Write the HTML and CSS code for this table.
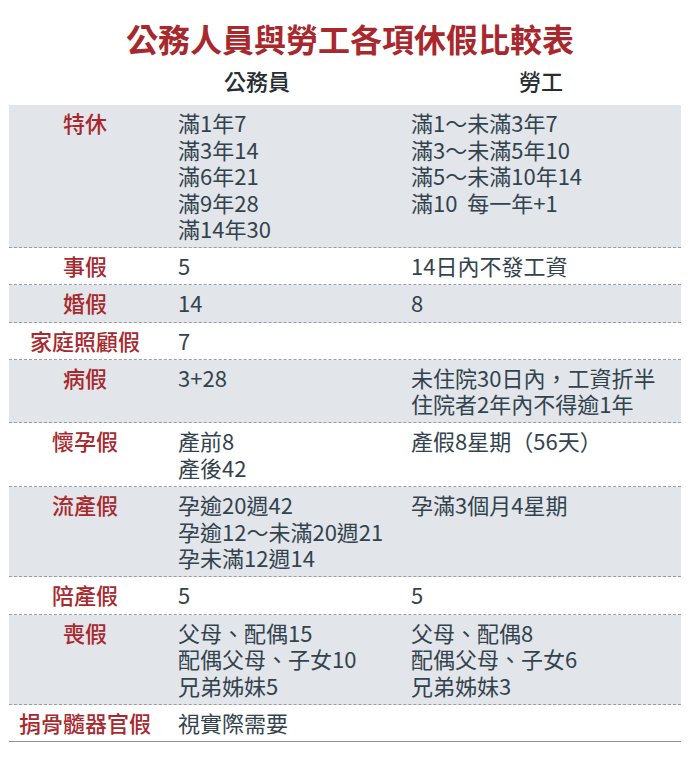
FILE: index.html
```html
<!DOCTYPE html>
<html lang="zh-Hant">
<head>
<meta charset="utf-8">
<title>公務人員與勞工各項休假比較表</title>
<link rel="stylesheet" href="styles.css">
</head>
<body>
<div class="page">
  <h1 class="title">公務人員與勞工各項休假比較表</h1>
  <div class="head">
    <div></div>
    <div class="h-gov">公務員</div>
    <div class="h-labor">勞工</div>
  </div>
  <div class="table">
    <div class="row gray">
      <div class="label">特休</div>
      <div class="val">滿1年7<br>滿3年14<br>滿6年21<br>滿9年28<br>滿14年30</div>
      <div class="val">滿1～未滿3年7<br>滿3～未滿5年10<br>滿5～未滿10年14<br>滿10&nbsp; 每一年+1</div>
    </div>
    <div class="row">
      <div class="label">事假</div>
      <div class="val">5</div>
      <div class="val">14日內不發工資</div>
    </div>
    <div class="row gray">
      <div class="label">婚假</div>
      <div class="val">14</div>
      <div class="val">8</div>
    </div>
    <div class="row">
      <div class="label">家庭照顧假</div>
      <div class="val">7</div>
      <div class="val"></div>
    </div>
    <div class="row gray">
      <div class="label">病假</div>
      <div class="val">3+28</div>
      <div class="val">未住院30日內，工資折半<br>住院者2年內不得逾1年</div>
    </div>
    <div class="row">
      <div class="label">懷孕假</div>
      <div class="val">產前8<br>產後42</div>
      <div class="val">產假8星期（56天）</div>
    </div>
    <div class="row gray">
      <div class="label">流產假</div>
      <div class="val">孕逾20週42<br>孕逾12～未滿20週21<br>孕未滿12週14</div>
      <div class="val">孕滿3個月4星期</div>
    </div>
    <div class="row">
      <div class="label">陪產假</div>
      <div class="val">5</div>
      <div class="val">5</div>
    </div>
    <div class="row gray">
      <div class="label">喪假</div>
      <div class="val">父母、配偶15<br>配偶父母、子女10<br>兄弟姊妹5</div>
      <div class="val">父母、配偶8<br>配偶父母、子女6<br>兄弟姊妹3</div>
    </div>
    <div class="row last">
      <div class="label">捐骨髓器官假</div>
      <div class="val">視實際需要</div>
      <div class="val"></div>
    </div>
  </div>
</div>
</body>
</html>
```
FILE: styles.css
```css
html, body {
  margin: 0;
  padding: 0;
  background: #ffffff;
}
.page {
  width: 690px;
  font-family: "Noto Sans CJK TC", "Noto Sans CJK SC", "Noto Sans", sans-serif;
  color: #33434d;
}
.title {
  margin: 0;
  padding: 18px 0 0 10px;
  font-size: 32px;
  line-height: 40px;
  font-weight: 700;
  color: #a7292d;
  text-align: center;
}
.head {
  display: grid;
  grid-template-columns: 169px 233px 1fr;
  margin: 9px 9px 0 9px;
  font-size: 22px;
  line-height: 26.5px;
  font-weight: 500;
  color: #262d33;
  height: 38px;
}
.h-gov {
  padding-left: 46px;
}
.h-labor {
  padding-left: 108px;
}
.table {
  margin: 0 9px;
  border-bottom: 1px solid #8b9298;
}
.row {
  display: grid;
  grid-template-columns: 169px 233px 1fr;
  padding: 4px 0 5.7px 0;
  font-size: 22px;
  line-height: 26.5px;
  border-bottom: 1px dashed #9a9ea3;
}
.row.last {
  border-bottom: none;
}
.row.gray {
  background: #e2e5ea;
}
.label {
  padding-right: 17px;
  text-align: center;
  color: #a7292d;
  font-weight: 500;
}
.val {
  color: #33434d;
  white-space: nowrap;
}
```
